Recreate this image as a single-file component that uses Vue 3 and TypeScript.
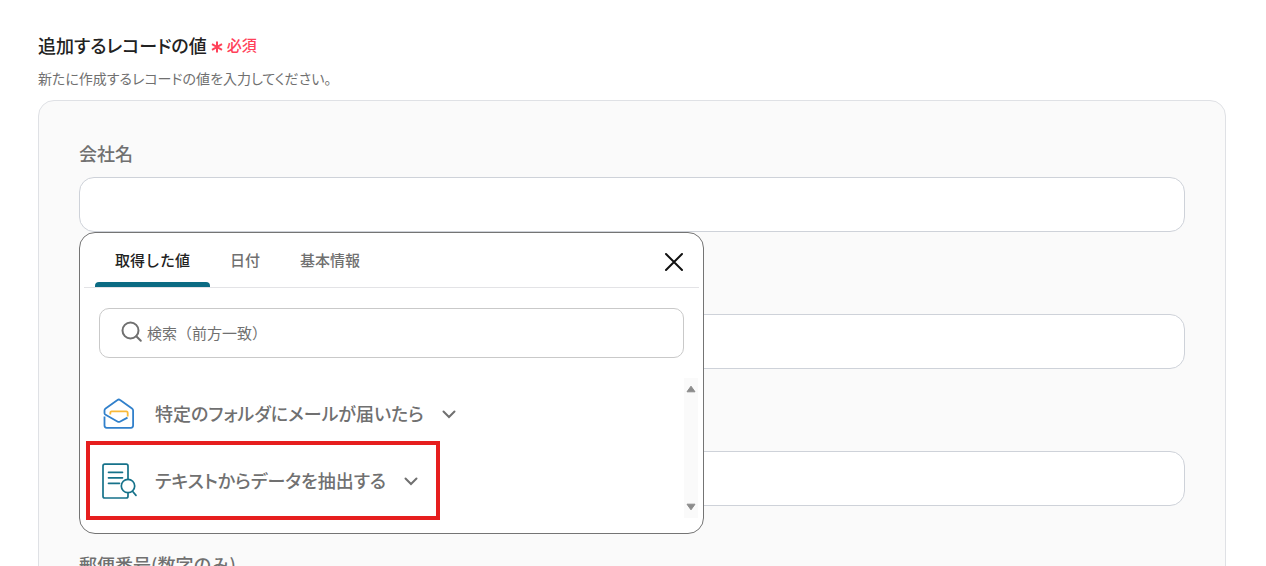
<script setup lang="ts">
import { ref } from 'vue'

interface Field {
  id: string
  label: string
}

const fields: Field[] = [
  { id: 'company', label: '会社名' },
  { id: 'value-2', label: '' },
  { id: 'value-3', label: '' },
  { id: 'postal', label: '郵便番号(数字のみ)' },
]

const tabs: string[] = ['取得した値', '日付', '基本情報']
const activeTab = ref(0)
const keyword = ref('')
const values = ref<string[]>(fields.map(() => ''))
</script>

<template>
  <main class="page">
    <h1 class="title">
      追加するレコードの値
      <span class="required">
        <svg class="asterisk" viewBox="0 0 12 12" aria-hidden="true">
          <path d="M6 .5v11M1 3.2l10 5.6M11 3.2L1 8.8" />
        </svg>
        必須
      </span>
    </h1>
    <p class="description">新たに作成するレコードの値を入力してください。</p>

    <section class="record">
      <div v-for="(field, i) in fields" :key="field.id" class="field">
        <label class="field-label" :for="field.id">{{ field.label }}</label>
        <div class="control">
          <input
            :id="field.id"
            v-model="values[i]"
            class="field-input"
            type="text"
            :aria-label="field.label || 'レコードの値'"
          />

          <div v-if="i === 0" class="popup">
            <div class="popup-head">
              <div class="tabs" role="tablist">
                <button
                  v-for="(tab, t) in tabs"
                  :key="tab"
                  type="button"
                  role="tab"
                  class="tab"
                  :class="{ active: t === activeTab }"
                  :aria-selected="t === activeTab"
                  @click="activeTab = t"
                >
                  {{ tab }}
                </button>
              </div>
              <button type="button" class="close" aria-label="閉じる">
                <svg viewBox="0 0 20 20" aria-hidden="true">
                  <path d="M2 2l16 16M18 2L2 18" />
                </svg>
              </button>
            </div>

            <div class="search">
              <svg class="search-icon" viewBox="0 0 22 22" aria-hidden="true">
                <circle cx="9.5" cy="9.5" r="8" />
                <path d="M15.3 15.3l4.5 4.5" />
              </svg>
              <input
                v-model="keyword"
                class="search-input"
                type="text"
                placeholder="検索（前方一致）"
                aria-label="検索（前方一致）"
              />
            </div>

            <div class="results">
              <div class="list">
                <button type="button" class="item">
                  <svg class="item-icon" viewBox="0 0 36 36" fill="none" aria-hidden="true">
                    <path
                      class="mail-blue"
                      d="M2.5 20.5V29.6Q2.5 31.8 4.7 31.8H28.9Q31.1 31.8 31.1 29.6V14.4Q31.1 13.2 30 12.4L18.1 4Q16.8 3 15.5 4L3.6 12.4Q2.5 13.2 2.5 14.4V17.2Q2.5 18.2 3.6 18.8L15.8 25.7Q16.8 26.2 17.8 25.7L25.5 21.6"
                    />
                    <path class="mail-yellow" d="M8.3 18.4V17.2Q8.3 15.4 9.7 15.4H24.3Q25.7 15.4 25.7 17.2V20.6" />
                  </svg>
                  <span>特定のフォルダにメールが届いたら</span>
                  <svg class="chevron" viewBox="0 0 14 14" aria-hidden="true">
                    <path d="M1.5 4.5L7 10l5.5-5.5" />
                  </svg>
                </button>
                <button type="button" class="item highlighted">
                  <svg class="item-icon document" viewBox="0 0 36 36" fill="none" aria-hidden="true">
                    <path d="M26 16.3V3Q26 1.2 24.2 1.2H2.8Q1 1.2 1 3V33.2Q1 35 2.8 35H24.2Q26 35 26 33.2V30" />
                    <path d="M6.5 9.3H20.5M6.5 14.8H20.5M6.5 20.3H17.5" />
                    <circle cx="26" cy="23" r="6.7" />
                    <path d="M30.5 28.3L34 32.4" />
                  </svg>
                  <span>テキストからデータを抽出する</span>
                  <svg class="chevron" viewBox="0 0 14 14" aria-hidden="true">
                    <path d="M1.5 4.5L7 10l5.5-5.5" />
                  </svg>
                </button>
              </div>
              <div class="scrollbar" aria-hidden="true">
                <svg viewBox="0 0 10 8"><path d="M5 1.2L9 6.8H1Z" /></svg>
                <svg viewBox="0 0 10 8"><path d="M5 6.8L1 1.2H9Z" /></svg>
              </div>
            </div>
          </div>
        </div>
      </div>
    </section>
  </main>
</template>

<style>
html,
body {
  margin: 0;
  background: #fff;
}
</style>

<style scoped>
* {
  box-sizing: border-box;
}

.page {
  height: 100vh;
  overflow: hidden;
  padding: 32px 40px 0 38px;
  font-family: "Noto Sans CJK JP", sans-serif;
  color: #707070;
}

button,
input {
  font-family: inherit;
  color: inherit;
}

button {
  padding: 0;
  border: 0;
  background: none;
  cursor: pointer;
}

svg {
  flex: none;
}

.title,
.description,
.item {
  font-feature-settings: "palt";
}

.title {
  display: flex;
  align-items: center;
  gap: 4px;
  margin: 0;
  font-size: 18px;
  font-weight: 500;
  line-height: 26px;
  color: #222;
}

.required {
  display: flex;
  align-items: center;
  gap: 4px;
  font-size: 15px;
  color: #ff4159;
}

.asterisk {
  width: 12px;
  height: 12px;
  margin-top: 4px;
  stroke: currentColor;
  stroke-width: 2;
}

.description {
  margin: 10px 0 12px;
  font-size: 14px;
  line-height: 20px;
}

.record {
  padding: 40px 40px 60px;
  border: 1px solid #dfe1e5;
  border-radius: 16px;
  background: #fafafa;
}

.field {
  margin-bottom: 46px;
}

.field-label {
  display: block;
  height: 24px;
  margin-bottom: 12px;
  font-size: 18px;
  font-weight: 500;
  line-height: 24px;
}

.control {
  position: relative;
}

.field-input {
  display: block;
  width: 100%;
  height: 55px;
  padding: 0 20px;
  border: 1px solid #ced2d9;
  border-radius: 15px;
  background: #fff;
  font-size: 18px;
}

.popup {
  position: absolute;
  top: 100%;
  left: 0;
  z-index: 1;
  width: 625px;
  max-width: 100%;
  padding-bottom: 15px;
  border: 1px solid #747474;
  border-radius: 16px;
  background: #fff;
}

.popup-head {
  display: flex;
  align-items: center;
  justify-content: space-between;
  margin: 0 4px;
  padding: 0 15px 0 11px;
  border-bottom: 1px solid #e3e3e6;
}

.tabs {
  display: flex;
}

.tab {
  position: relative;
  height: 54px;
  padding: 0 20px 2px;
  font-size: 15px;
  font-weight: 500;
}

.tab.active {
  color: #222;
}

.tab.active::after {
  content: "";
  position: absolute;
  right: 0;
  bottom: 0;
  left: 0;
  height: 5px;
  border-radius: 4px 4px 0 0;
  background: #0b6b83;
}

.close {
  height: 20px;
  margin-top: 4px;
}

.close svg {
  display: block;
  width: 20px;
  height: 20px;
  fill: none;
  stroke: #111;
  stroke-width: 2;
  stroke-linecap: round;
}

.search {
  display: flex;
  align-items: center;
  gap: 4px;
  height: 50px;
  margin: 20px 19px 0;
  padding: 0 21px 2px;
  border: 1px solid #c9c9c9;
  border-radius: 10px;
}

.search-icon {
  width: 22px;
  height: 22px;
  fill: none;
  stroke: #707070;
  stroke-width: 2;
  stroke-linecap: round;
}

.search-input {
  flex: 1;
  min-width: 0;
  padding: 0;
  border: 0;
  outline: 0;
  background: none;
  font-size: 15px;
}

.search-input::placeholder {
  color: #707070;
  opacity: 1;
}

.results {
  display: flex;
  justify-content: space-between;
  margin: 20px 5px 0 22px;
}

.list {
  display: flex;
  flex-direction: column;
  align-items: flex-start;
  gap: 31px;
  padding: 18px 0 19px;
}

.item {
  position: relative;
  display: flex;
  align-items: center;
  gap: 17px;
  height: 36px;
  font-size: 18px;
  font-weight: 500;
}

.item span {
  padding: 0 1px 3px 0;
}

.highlighted::after {
  content: "";
  position: absolute;
  inset: -22px -22px -21px -16px;
  border: 4px solid #e61e1e;
}

.item-icon {
  width: 36px;
  height: 36px;
}

.mail-blue {
  stroke: #3180cb;
  stroke-width: 1.8;
  stroke-linejoin: round;
}

.mail-yellow {
  stroke: #f9b938;
  stroke-width: 1.8;
  stroke-linejoin: round;
}

.document {
  stroke: #16728a;
  stroke-width: 1.7;
  stroke-linecap: round;
}

.chevron {
  width: 14px;
  height: 14px;
  fill: none;
  stroke: #707070;
  stroke-width: 2;
  stroke-linecap: round;
}

.scrollbar {
  display: flex;
  flex-direction: column;
  justify-content: space-between;
  align-items: center;
  width: 14px;
  padding: 7px 0;
  background: #fafafa;
}

.scrollbar svg {
  width: 10px;
  height: 8px;
  fill: #8c8c8c;
  stroke: #8c8c8c;
  stroke-linejoin: round;
}
</style>
